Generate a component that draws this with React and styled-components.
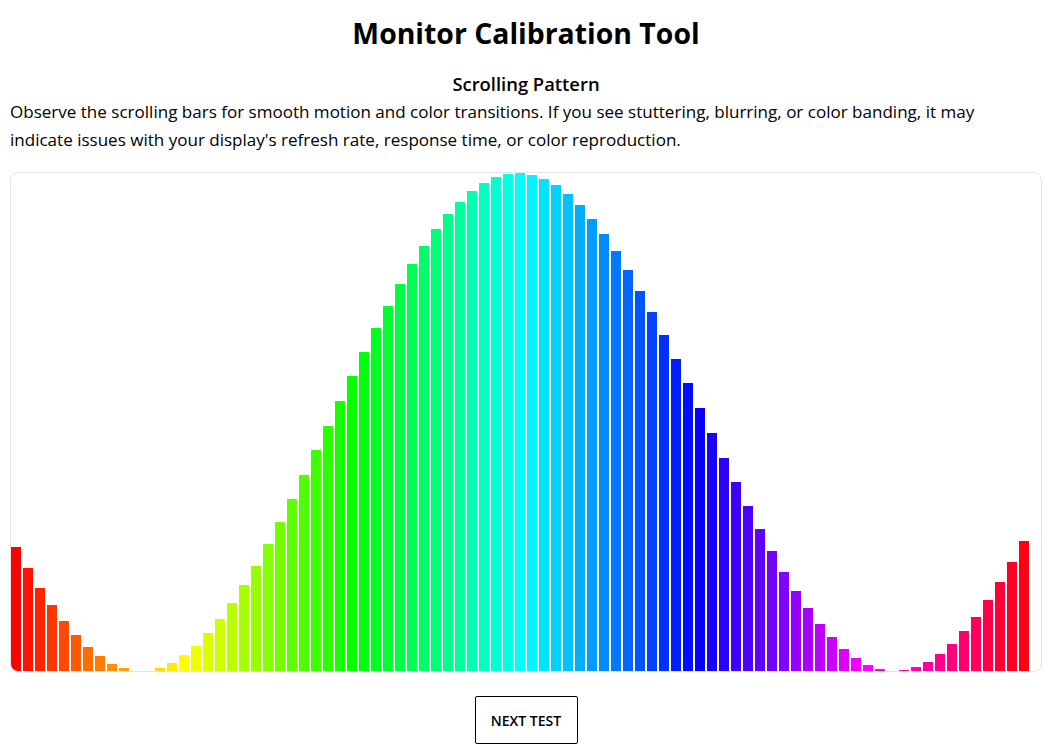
import React from "react";
import styled, { createGlobalStyle } from "styled-components";

const Global = createGlobalStyle`
  html, body { margin: 0; padding: 0; background: #fff; }
  body { font-family: "Open Sans", "Noto Sans", sans-serif; color: #000; }
`;

const Page = styled.div`
  padding: 0 8px 0 10px;
  display: flex;
  flex-direction: column;
  align-items: stretch;
`;

const Title = styled.h1`
  margin: 14px 0 20px;
  font-size: 28.4px;
  line-height: 38px;
  font-weight: 700;
  text-align: center;
`;

const SectionTitle = styled.h2`
  margin: 0 0 2px;
  font-size: 18.4px;
  line-height: 24px;
  font-weight: 600;
  text-align: center;
`;

const Description = styled.p`
  margin: 0 0 18px;
  padding-right: 10px;
  font-size: 17.05px;
  line-height: 28px;
`;

const Chart = styled.div`
  box-sizing: border-box;
  height: 500px;
  border: 1px solid #e4e4e4;
  border-radius: 8px;
  overflow: hidden;
  display: flex;
  align-items: flex-end;
  gap: 2px;
`;

const Bar = styled.div`
  flex: 0 0 10px;
  width: 10px;
`;

const ButtonRow = styled.div`
  display: flex;
  justify-content: center;
  margin-top: 24px;
`;

const NextButton = styled.button`
  box-sizing: border-box;
  width: 103px;
  height: 48px;
  background: #fff;
  border: 1px solid #000;
  border-radius: 2px;
  font-family: "Open Sans", "Noto Sans", sans-serif;
  font-size: 14px;
  font-weight: 600;
  color: #000;
  cursor: pointer;
`;

const BAR_COUNT = 85;
const bars = Array.from({ length: BAR_COUNT }, (_, i) => ({
  h: 50 + 50 * Math.sin(i * 0.1 + 3.669),
  hue: (i * 360) / BAR_COUNT,
}));

export default function App() {
  return (
    <>
      <Global />
      <Page>
        <Title>Monitor Calibration Tool</Title>
        <SectionTitle>Scrolling Pattern</SectionTitle>
        <Description>
          Observe the scrolling bars for smooth motion and color transitions. If you see stuttering, blurring, or color banding, it may indicate issues with your display's refresh rate, response time, or color reproduction.
        </Description>
        <Chart>
          {bars.map((b, i) => (
            <Bar
              key={i}
              style={{ height: `${b.h}%`, background: `hsl(${b.hue}, 100%, 50%)` }}
            />
          ))}
        </Chart>
        <ButtonRow>
          <NextButton>NEXT TEST</NextButton>
        </ButtonRow>
      </Page>
    </>
  );
}
